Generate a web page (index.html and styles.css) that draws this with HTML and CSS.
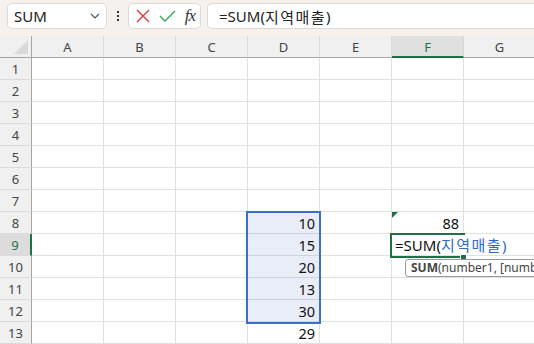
FILE: index.html
```html
<!DOCTYPE html>
<html lang="ko">
<head>
  <meta charset="UTF-8" />
  <title>SUM</title>
  <link rel="stylesheet" href="styles.css">
</head>
<body>
  <div class="app">
    <div class="toolbar">
      <div class="namebox">
        <span>SUM</span>
        <svg class="chev" width="10" height="6" viewBox="0 0 10 6"><path d="M1 1 L5 5 L9 1" fill="none" stroke="#555" stroke-width="1.2"/></svg>
      </div>
      <div class="kebab"><i></i><i></i><i></i></div>
      <div class="fxbox">
        <svg width="14" height="14" viewBox="0 0 14 14"><path d="M1 1 L13 13 M13 1 L1 13" stroke="#d83b3b" stroke-width="1.4" fill="none"/></svg>
        <svg width="17" height="14" viewBox="0 0 17 14"><path d="M1 7 L6 12 L16 2" stroke="#34a853" stroke-width="1.4" fill="none"/></svg>
        <span class="fx">fx</span>
      </div>
      <div class="formula">=SUM(<span class="kr">지역매출</span>)</div>
    </div>

    <div class="sheet">
      <div class="row head">
        <div class="corner"></div>
        <div class="ch">A</div><div class="ch">B</div><div class="ch">C</div><div class="ch">D</div><div class="ch">E</div><div class="ch on">F</div><div class="ch">G</div>
      </div>
      <div class="row"><div class="rh">1</div><div class="c"></div><div class="c"></div><div class="c"></div><div class="c"></div><div class="c"></div><div class="c"></div><div class="c"></div></div>
      <div class="row"><div class="rh">2</div><div class="c"></div><div class="c"></div><div class="c"></div><div class="c"></div><div class="c"></div><div class="c"></div><div class="c"></div></div>
      <div class="row"><div class="rh">3</div><div class="c"></div><div class="c"></div><div class="c"></div><div class="c"></div><div class="c"></div><div class="c"></div><div class="c"></div></div>
      <div class="row"><div class="rh">4</div><div class="c"></div><div class="c"></div><div class="c"></div><div class="c"></div><div class="c"></div><div class="c"></div><div class="c"></div></div>
      <div class="row"><div class="rh">5</div><div class="c"></div><div class="c"></div><div class="c"></div><div class="c"></div><div class="c"></div><div class="c"></div><div class="c"></div></div>
      <div class="row"><div class="rh">6</div><div class="c"></div><div class="c"></div><div class="c"></div><div class="c"></div><div class="c"></div><div class="c"></div><div class="c"></div></div>
      <div class="row"><div class="rh">7</div><div class="c"></div><div class="c"></div><div class="c"></div><div class="c"></div><div class="c"></div><div class="c"></div><div class="c"></div></div>
      <div class="row"><div class="rh">8</div><div class="c"></div><div class="c"></div><div class="c"></div><div class="c sel">10</div><div class="c"></div><div class="c err">88</div><div class="c"></div></div>
      <div class="row"><div class="rh on">9</div><div class="c"></div><div class="c"></div><div class="c"></div><div class="c sel">15</div><div class="c"></div><div class="c"></div><div class="c"></div></div>
      <div class="row"><div class="rh">10</div><div class="c"></div><div class="c"></div><div class="c"></div><div class="c sel">20</div><div class="c"></div><div class="c"></div><div class="c"></div></div>
      <div class="row"><div class="rh">11</div><div class="c"></div><div class="c"></div><div class="c"></div><div class="c sel">13</div><div class="c"></div><div class="c"></div><div class="c"></div></div>
      <div class="row"><div class="rh">12</div><div class="c"></div><div class="c"></div><div class="c"></div><div class="c sel">30</div><div class="c"></div><div class="c"></div><div class="c"></div></div>
      <div class="row"><div class="rh">13</div><div class="c"></div><div class="c"></div><div class="c"></div><div class="c">29</div><div class="c"></div><div class="c"></div><div class="c"></div></div>

      <!-- overlays -->
      <div class="selbox"></div>
      <div class="editbox"></div>
      <div class="edittext">=SUM(<span class="ref"><span class="kr">지역매출</span>)</span></div>
      <div class="handle"></div>
      <div class="tip"><b>SUM</b>(number1, [number2], ...)</div>
    </div>
  </div>
</body>
</html>
```

FILE: styles.css
```css
body {
  margin: 0;
  font-family: "Noto Sans", "Noto Sans CJK KR", sans-serif;
  color: #222;
  background: #fff;
}
.app {
  width: 534px;
  height: 344px;
  overflow: hidden;
}
.toolbar {
  display: flex;
  align-items: flex-start;
  height: 36px;
  padding: 3px 0 0 7px;
  box-sizing: border-box;
  background-color: #f4f1ee;
}
.namebox, .fxbox, .formula {
  height: 26px;
  box-sizing: border-box;
  background: #fff;
  border: 1px solid #dcdad7;
  border-radius: 5px;
  display: flex;
  align-items: center;
}
.namebox {
  width: 100px;
  padding: 0 6px 0 6px;
  justify-content: space-between;
  font-size: 15px;
}
.kebab {
  width: 21px;
  height: 26px;
  display: flex;
  flex-direction: column;
  align-items: center;
  justify-content: center;
  gap: 2px;
}
.kebab i {
  width: 2px;
  height: 2px;
  background: #333;
}
.fxbox {
  width: 73px;
  padding: 0 5px 0 7px;
  justify-content: space-between;
}
.fx {
  font-family: "Liberation Serif", serif;
  font-style: italic;
  font-size: 17px;
  color: #333;
  letter-spacing: -1px;
}
.formula {
  margin-left: 6px;
  flex: 1;
  border-right: none;
  border-radius: 5px 0 0 5px;
  padding-left: 11px;
  font-size: 15px;
  white-space: pre;
}
.kr {
  letter-spacing: 1.5px;
}
.sheet {
  position: relative;
}
.row {
  display: flex;
  height: 22px;
}
.corner, .rh {
  width: 32px;
  flex: none;
  box-sizing: border-box;
  background: #f0f0f0;
  border-right: 1px solid #a6a6a6;
  border-bottom: 1px solid #dadada;
}
.corner {
  position: relative;
  border-bottom-color: #a6a6a6;
}
.corner::after {
  content: "";
  position: absolute;
  right: 3px;
  bottom: 3px;
  border-left: 14px solid transparent;
  border-bottom: 14px solid #dadada;
}
.rh {
  text-align: center;
  font-size: 13px;
  line-height: 22px;
  color: #444;
}
.rh.on {
  background: #dcdcdc;
  border-right: 2px solid #1e7145;
  color: #1e7145;
}
.ch {
  width: 72px;
  flex: none;
  box-sizing: border-box;
  background: #f0f0f0;
  border-right: 1px solid #d8d8d8;
  border-bottom: 1px solid #a6a6a6;
  text-align: center;
  font-size: 13px;
  line-height: 22px;
  color: #444;
}
.ch.on {
  background: #e0e0e0;
  border-bottom: 2px solid #1e7145;
  color: #1e7145;
}
.c {
  width: 72px;
  flex: none;
  box-sizing: border-box;
  border-right: 1px solid #e1e1e1;
  border-bottom: 1px solid #e1e1e1;
  text-align: right;
  padding-right: 4px;
  font-size: 14.5px;
  line-height: 23px;
  color: #111;
}
.c.sel {
  background: #e8edf7;
  border-bottom-color: #cdd3de;
}
.c.err {
  position: relative;
}
.c.err::before {
  content: "";
  position: absolute;
  left: 0;
  top: 0;
  border-top: 6px solid #1e7145;
  border-right: 6px solid transparent;
}
.selbox {
  position: absolute;
  left: 246px;
  top: 175px;
  width: 75px;
  height: 113px;
  box-sizing: border-box;
  border: 2px solid #3a71c6;
}
.editbox {
  position: absolute;
  left: 390px;
  top: 197px;
  width: 75px;
  height: 25px;
  box-sizing: border-box;
  border: 2px solid #1e7145;
}
.edittext {
  position: absolute;
  left: 392px;
  top: 199px;
  height: 20px;
  padding: 0 3px 0 3px;
  background: #fff;
  font-size: 15px;
  line-height: 20px;
  white-space: nowrap;
  color: #111;
}
.edittext .ref {
  color: #2f6bc4;
}
.handle {
  position: absolute;
  left: 460px;
  top: 218px;
  width: 5px;
  height: 5px;
  background: #1e7145;
  border: 1px solid #fff;
}
.tip {
  position: absolute;
  left: 405px;
  top: 223px;
  height: 18px;
  box-sizing: border-box;
  padding: 0 5px;
  background: #fff;
  border: 1px solid #9a9a9a;
  border-radius: 3px;
  font-size: 12px;
  line-height: 16px;
  color: #444;
  white-space: nowrap;
}
```
